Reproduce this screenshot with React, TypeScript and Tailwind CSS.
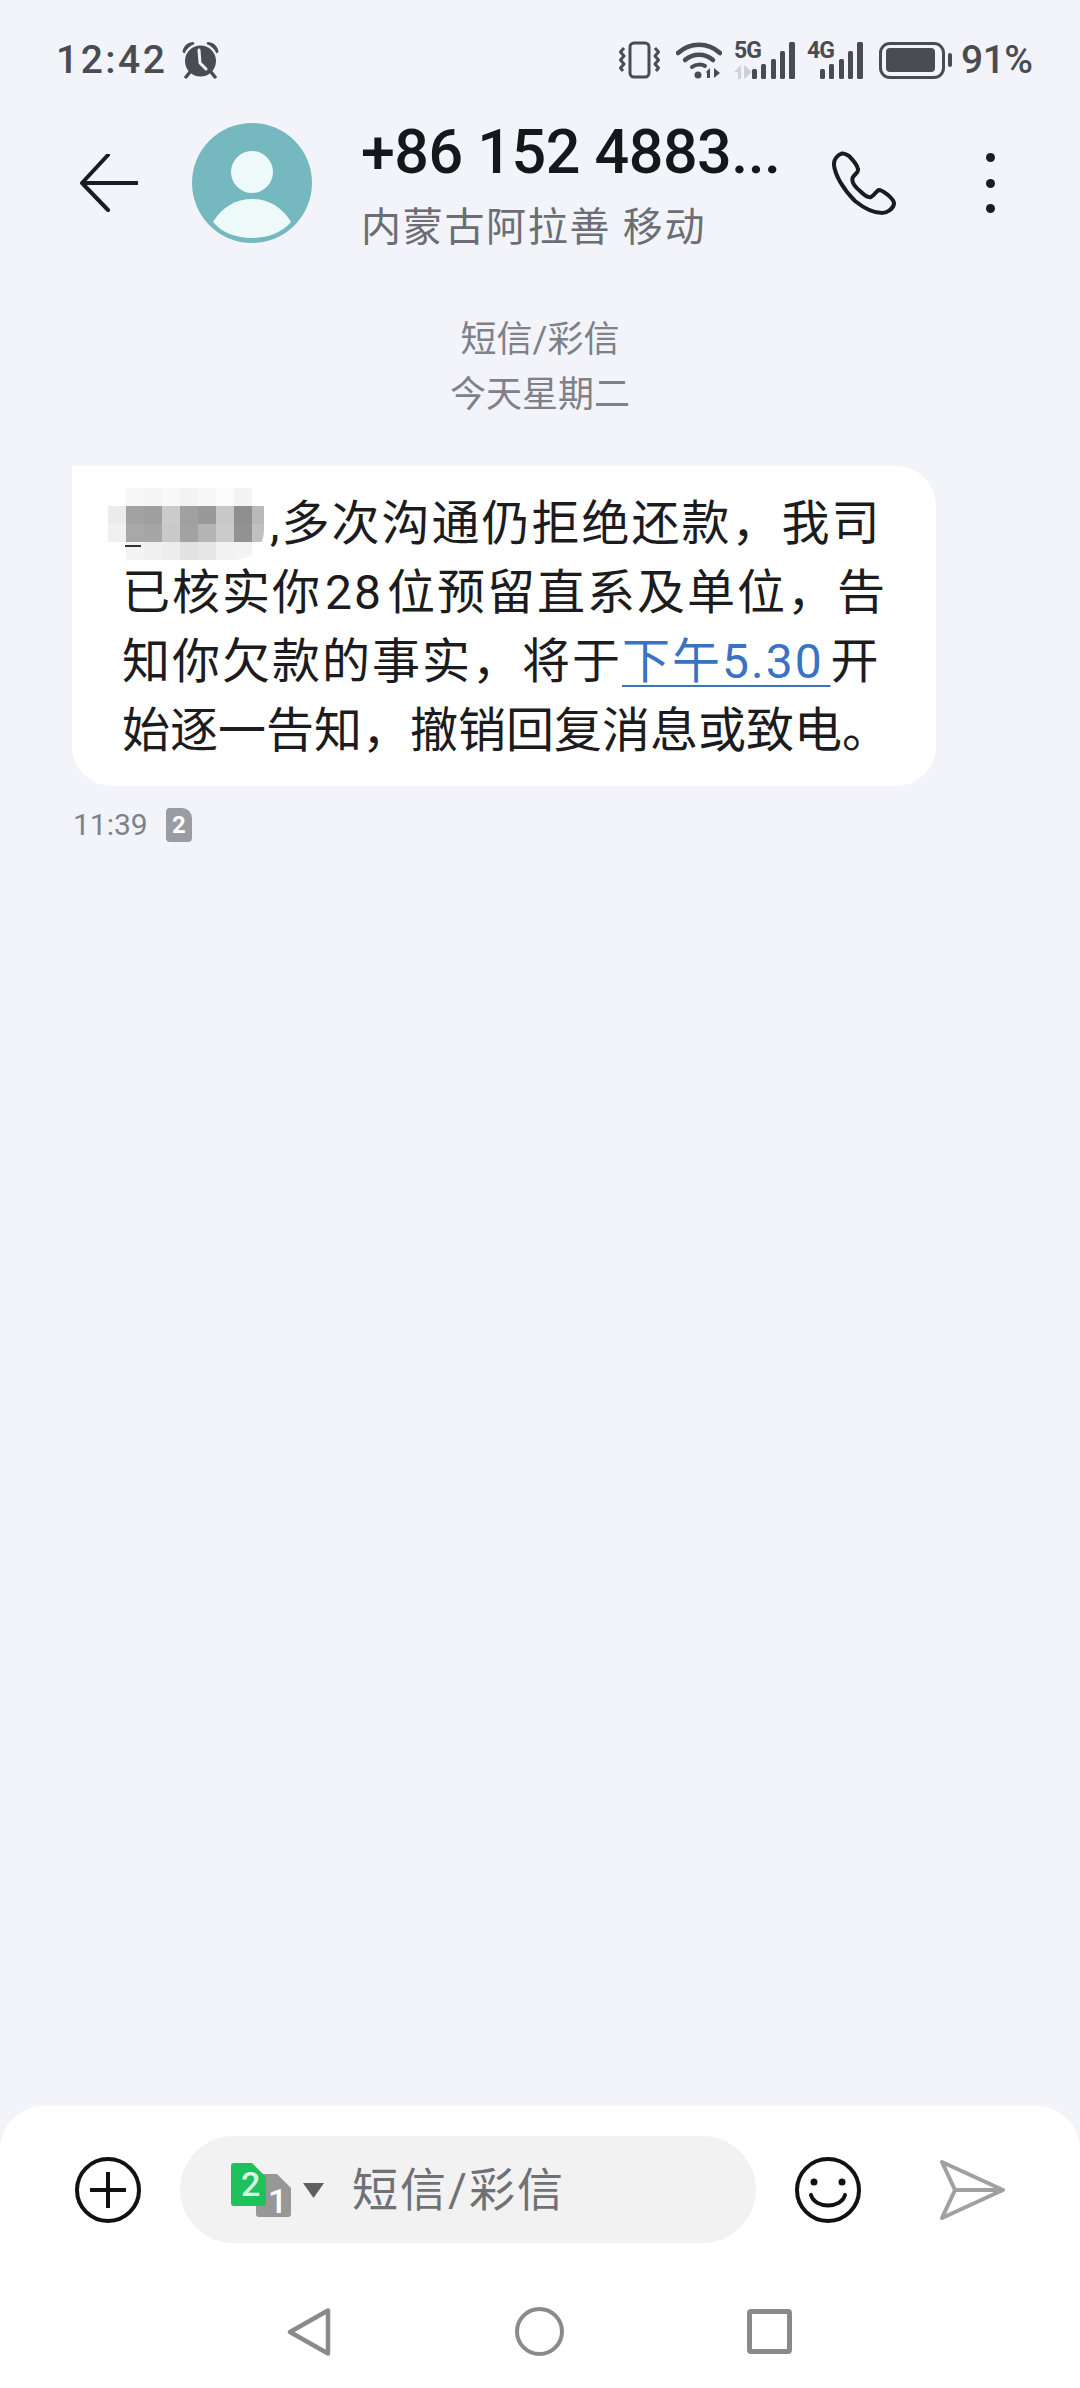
const FONT = 'font-[Roboto,"Noto_Sans_CJK_SC",sans-serif]';

const mosaic = [
  ['bg-white', 'bg-[#f7f7f7]', 'bg-[#f5f5f5]', 'bg-[#f8f8f8]', 'bg-[#f3f3f3]', 'bg-[#f7f7f7]', 'bg-[#fbfbfb]', 'bg-[#f4f4f4]', 'bg-white'],
  ['bg-[#ececec]', 'bg-[#a2a2a2]', 'bg-[#9f9f9f]', 'bg-[#cbcbcb]', 'bg-[#a0a0a0]', 'bg-[#999999]', 'bg-[#c8c8c8]', 'bg-[#8f8f8f]', 'bg-[#b9b9b9]'],
  ['bg-[#f0f0f0]', 'bg-[#a8a8a8]', 'bg-[#a6a6a6]', 'bg-[#c9c9c9]', 'bg-[#a2a2a2]', 'bg-[#b4b4b4]', 'bg-[#cbcbcb]', 'bg-[#929292]', 'bg-[#c0c0c0]'],
  ['bg-white', 'bg-[#f4f4f4]', 'bg-[#f0f0f0]', 'bg-[#ededed]', 'bg-[#e2e2e2]', 'bg-[#e6e6e6]', 'bg-[#f2f2f2]', 'bg-[#f3f3f3]', 'bg-white'],
];

function Mosaic() {
  return (
    <span className="relative -my-[10px] -ml-[14px] mr-[6px] inline-grid -translate-y-[3px] grid-cols-[repeat(8,18px)_12px] grid-rows-[18px_18px_18px_18px] overflow-hidden rounded-br-[30px] align-middle">
      {mosaic.flat().map((c, i) => (
        <span key={i} className={c} />
      ))}
      <span className="absolute left-[17px] top-[57px] h-[2px] w-[16px] bg-[#333333]" />
    </span>
  );
}

function Alarm() {
  return (
    <svg width="38" height="38" viewBox="0 0 38 38" fill="none">
      <circle cx="18.5" cy="20" r="15.5" fill="#4a4c52" />
      <path d="M0.5 11 C1 5 6 1 11.5 1 L12.5 3 C8 4.5 4.5 8 2.5 12.5 Z" fill="#4a4c52" />
      <path d="M36.5 11 C36 5 31 1 25.5 1 L24.5 3 C29 4.5 32.5 8 34.5 12.5 Z" fill="#4a4c52" />
      <path d="M8 31 L4 36 M29 31 L33 36" stroke="#4a4c52" strokeWidth="3.5" strokeLinecap="round" />
      <path d="M17 9 L18 22 L24 28" stroke="#f2f4f9" strokeWidth="3" strokeLinecap="round" strokeLinejoin="round" />
    </svg>
  );
}

function Vibrate() {
  return (
    <svg width="41" height="38" viewBox="0 0 41 38" fill="none" stroke="#4a4c52" strokeWidth="3">
      <rect x="11" y="2" width="19" height="34" rx="4" />
      <path d="M5 7 L1.5 11 L5 15 L1.5 19 L5 23 L1.5 27 L4 30" strokeLinejoin="round" />
      <path d="M36 7 L39.5 11 L36 15 L39.5 19 L36 23 L39.5 27 L37 30" strokeLinejoin="round" />
    </svg>
  );
}

function Wifi() {
  return (
    <svg width="46" height="37" viewBox="0 0 46 37" fill="none">
      <path d="M2 11 C14 0 32 0 44 11" stroke="#4a4c52" strokeWidth="4.5" strokeLinecap="round" />
      <path d="M9 18 C17 11 29 11 37 18" stroke="#4a4c52" strokeWidth="4.5" strokeLinecap="round" />
      <path d="M16 25 C20 22 26 22 29 24" stroke="#4a4c52" strokeWidth="4" strokeLinecap="round" />
      <circle cx="22" cy="33" r="3.5" fill="#4a4c52" />
      <path d="M30 30 L34 26 V36 H31 V31 Z M38 26 L44 31 L38 36 Z" fill="#4a4c52" />
    </svg>
  );
}

function Bars() {
  return (
    <svg width="43" height="37" viewBox="0 0 43 37" fill="#4a4c52">
      <rect x="0" y="27" width="5" height="10" rx="1.5" />
      <rect x="9" y="22" width="5" height="15" rx="1.5" />
      <rect x="19" y="17" width="5" height="20" rx="1.5" />
      <rect x="28" y="9" width="5" height="28" rx="1.5" />
      <rect x="37" y="0" width="6" height="37" rx="1.5" />
    </svg>
  );
}

function Signal5G() {
  return (
    <div className="relative flex h-[37px] w-[61px] justify-end">
      <span className="absolute left-0 -top-[2px] text-[23px] leading-[22px] font-bold tracking-[-1px] text-[#4a4c52]">5G</span>
      <svg className="absolute left-0 bottom-0" width="18" height="14" viewBox="0 0 18 14" fill="#cfd1d6">
        <path d="M0 7 L7 0 V14 H4 V7 Z M10 0 L18 7 L10 14 Z" />
      </svg>
      <Bars />
    </div>
  );
}

function Signal4G() {
  return (
    <div className="relative flex h-[37px] w-[56px] justify-end">
      <span className="absolute left-0 -top-[2px] text-[23px] leading-[22px] font-bold tracking-[-1px] text-[#4a4c52]">4G</span>
      <Bars />
    </div>
  );
}

function Battery() {
  return (
    <div className="flex items-center gap-[3px]">
      <div className="flex h-[37px] w-[66px] items-center rounded-[11px] border-[3px] border-[#4a4c52] pl-[4px]">
        <div className="h-[24px] w-[49px] rounded-[4px] bg-[#4a4c52]" />
      </div>
      <div className="h-[14px] w-[4px] rounded-full bg-[#4a4c52]" />
    </div>
  );
}

function StatusBar() {
  return (
    <div className="mt-[40px] flex h-[40px] items-center pl-[56px] pr-[48px] text-[#4a4c52]">
      <span className="w-[126px] text-[39px] leading-[40px] font-medium tracking-[2.5px]">12:42</span>
      <Alarm />
      <div className="ml-auto flex items-center">
        <Vibrate />
        <div className="ml-[16px]"><Wifi /></div>
        <div className="ml-[12px]"><Signal5G /></div>
        <div className="ml-[12px]"><Signal4G /></div>
        <div className="ml-[16px]"><Battery /></div>
        <span className="ml-[9px] w-[71px] text-[39px] leading-[40px] font-medium tracking-[-0.5px] whitespace-nowrap">91%</span>
      </div>
    </div>
  );
}

function Header() {
  return (
    <div className="mt-[37px] flex h-[132px] items-center pl-[80px]">
      <svg width="58" height="58" viewBox="0 0 58 58" fill="none" stroke="#1b1c20" strokeWidth="4" strokeLinecap="round" strokeLinejoin="round">
        <path d="M28 1 L2 29 L28 56 M2 29 H57" />
      </svg>
      <svg className="ml-[54px]" width="120" height="120" viewBox="0 0 120 120">
        <circle cx="60" cy="60" r="60" fill="#75b8bf" />
        <circle cx="60" cy="49" r="21" fill="#eefafa" />
        <path d="M21 99 C30 84 44 76 60 76 C76 76 90 84 99 99 C90 110 75 115 60 115 C45 115 30 110 21 99 Z" fill="#eefafa" />
      </svg>
      <div className="ml-[49px] flex w-[471px] flex-col">
        <span className="h-[70px] text-[61px] leading-[70px] font-medium tracking-[-0.5px] text-[#16171b] whitespace-nowrap">+86 152 4883...</span>
        <span className="mt-[19px] text-[40px] leading-[44px] tracking-[1.7px] text-[#6b6e74] whitespace-nowrap">内蒙古阿拉善 移动</span>
      </div>
      <svg width="64" height="64" viewBox="0 0 64 64" fill="none" stroke="#1b1c20" strokeWidth="4" strokeLinejoin="round">
        <path d="M10 2.5 C6 3.5 1.5 8 2 14 C3 24 11 38 23 50 C33 58 42 62 50 62 C55 62 61 58 62 53 C62.5 50 60 47.5 56 44 C52 41 49 38.5 47 39 C44 40 43 44 39 46 C36 47 33 45 28 40 C22 35 19 30 21 26 C23 23 27 21 26 18 C25 14 21 9 17 5 C14 3 12 2 10 2.5 Z" />
      </svg>
      <div className="ml-[90px] flex flex-col gap-[16.5px]">
        <div className="h-[9px] w-[9px] rounded-full bg-[#1b1c20]" />
        <div className="h-[9px] w-[9px] rounded-full bg-[#1b1c20]" />
        <div className="h-[9px] w-[9px] rounded-full bg-[#1b1c20]" />
      </div>
    </div>
  );
}

function Message() {
  return (
    <div className="ml-[72px] mt-[43px] h-[320px] w-[864px] rounded-[40px] rounded-tl-none bg-white pl-[50px] pt-[23px] text-[48px] leading-[69px] tracking-[2px] text-[#1c1c1e] whitespace-nowrap">
      <div><Mosaic />,多次沟通仍拒绝还款，我司</div>
      <div>已核实你<span className="ml-[3px] mr-[4px]">28</span>位预留直系及单位，告</div>
      <div>
        知你欠款的事实，将于
        <span className="text-[#3a72c4] underline decoration-2 underline-offset-[7px]">下午5.30&#8202;</span>
        开
      </div>
      <div className="tracking-normal">始逐一告知，撤销回复消息或致电。</div>
    </div>
  );
}

function Sim({ n, green }: { n: string; green?: boolean }) {
  return (
    <div className="relative h-[43px] w-[35px]">
      <svg className="absolute inset-0" width="35" height="43" viewBox="0 0 35 43">
        <path d="M3 0 H21 L35 14 V40 Q35 43 32 43 H3 Q0 43 0 40 V3 Q0 0 3 0 Z" fill={green ? '#1fc15c' : '#979797'} />
      </svg>
      <span className={green ? 'absolute left-[10px] top-[2px] text-[34px] leading-[38px] font-medium text-[#d9f7e4]' : 'absolute left-[12px] top-[10px] text-[34px] leading-[34px] font-medium text-white'}>{n}</span>
    </div>
  );
}

function Composer() {
  return (
    <div className="h-[282px] rounded-t-[44px] bg-white">
      <div className="flex items-center pt-[30px]">
        <svg className="ml-[75px]" width="66" height="66" viewBox="0 0 66 66" fill="none" stroke="#111" strokeWidth="4">
          <circle cx="33" cy="33" r="31" />
          <path d="M15 33 H51 M33 15 V51" />
        </svg>
        <div className="ml-[39px] flex h-[107px] w-[576px] items-center rounded-full bg-[#f2f2f3] pl-[51px]">
          <div className="relative h-[54px] w-[60px]">
            <div className="absolute left-[25px] top-[11px]"><Sim n="1" /></div>
            <div className="absolute left-0 top-0"><Sim n="2" green /></div>
          </div>
          <svg className="ml-[11px]" width="23" height="16" viewBox="0 0 23 16" fill="#5f5f5f">
            <path d="M1 1 H22 L11.5 16 Z" />
          </svg>
          <span className="ml-[27px] text-[46px] leading-[54px] tracking-[2px] text-[#6f7175]">短信/彩信</span>
        </div>
        <svg className="ml-[39px]" width="66" height="66" viewBox="0 0 66 66" fill="none" stroke="#111" strokeWidth="4">
          <circle cx="33" cy="33" r="31" />
          <circle cx="19" cy="25" r="3.5" fill="#111" stroke="none" />
          <circle cx="47" cy="25" r="3.5" fill="#111" stroke="none" />
          <path d="M16 38 C20 52 46 52 50 38" strokeLinecap="round" />
        </svg>
        <svg className="ml-[79px]" width="65" height="60" viewBox="0 0 65 60" fill="none" stroke="#a0a0a0" strokeWidth="4" strokeLinejoin="round">
          <path d="M2 2 L63 30 L2 58 L15 30 Z M15 30 H63" />
        </svg>
      </div>
      <div className="mt-[64px] flex items-center">
        <svg className="ml-[287px]" width="44" height="48" viewBox="0 0 44 48" fill="none" stroke="#8a8a8a" strokeWidth="4.5" strokeLinejoin="round">
          <path d="M41 2.5 V45.5 L3 24 Z" />
        </svg>
        <div className="ml-[184px] h-[49px] w-[49px] rounded-full border-[4.5px] border-[#8a8a8a]" />
        <div className="ml-[183px] h-[45px] w-[45px] rounded-[4px] border-[5px] border-[#8a8a8a]" />
      </div>
    </div>
  );
}

export default function App() {
  return (
    <div className={`${FONT} flex h-[2388px] w-[1080px] flex-col overflow-hidden bg-[#f2f4f9]`}>
      <StatusBar />
      <Header />
      <div className="mt-[64px] flex flex-col items-center text-[36px] leading-[55px] text-[#7e8188]">
        <span>短信/彩信</span>
        <span>今天星期二</span>
      </div>
      <Message />
      <div className="ml-[73px] mt-[22px] flex h-[34px] items-center">
        <span className="w-[76px] text-[30px] leading-[34px] text-[#7e8188]">11:39</span>
        <div className="ml-[17px] flex h-[34px] w-[26px] items-center justify-center rounded-[4px] rounded-tr-[10px] bg-[#9a9ca3] text-[24px] leading-[24px] font-bold text-white">2</div>
      </div>
      <div className="flex-1" />
      <Composer />
    </div>
  );
}
